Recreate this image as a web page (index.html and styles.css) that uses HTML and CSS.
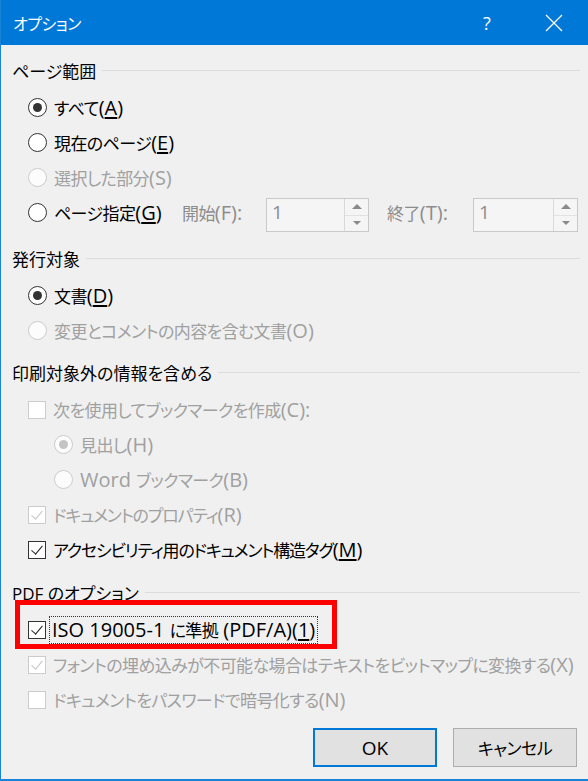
FILE: index.html
```html
<!DOCTYPE html>
<html lang="ja">
<head>
  <meta charset="UTF-8" />
  <meta name="viewport" content="width=device-width, initial-scale=1.0"/>
  <title>オプション</title>
  <link rel="stylesheet" href="styles.css">
</head>
<body>
  <div class="dialog">
    <header class="titlebar">
      <span class="title">オプション</span>
      <span class="help">?</span>
      <span class="close">
        <svg width="18" height="18" viewBox="0 0 18 18"><path d="M1 1L17 17M17 1L1 17" stroke="#fff" stroke-width="1.3" fill="none"/></svg>
      </span>
    </header>

    <div class="content">
      <!-- ページ範囲 -->
      <section class="group">
        <div class="group-head"><span>ページ範囲</span></div>
        <div class="row"><span class="radio checked"></span><span class="label">すべて<span class="en">(<u>A</u>)</span></span></div>
        <div class="row"><span class="radio"></span><span class="label">現在のページ<span class="en">(<u>E</u>)</span></span></div>
        <div class="row disabled"><span class="radio"></span><span class="label">選択した部分<span class="en">(S)</span></span></div>
        <div class="row">
          <span class="radio"></span><span class="label page-spec">ページ指定<span class="en">(<u>G</u>)</span></span>
          <span class="spin-label first">開始<span class="en">(F):</span></span>
          <span class="spin"><span class="spin-value en">1</span><span class="spin-btns"><span class="up"></span><span class="down"></span></span></span>
          <span class="spin-label">終了<span class="en">(T):</span></span>
          <span class="spin wide"><span class="spin-value en">1</span><span class="spin-btns"><span class="up"></span><span class="down"></span></span></span>
        </div>
      </section>

      <!-- 発行対象 -->
      <section class="group after-spin">
        <div class="group-head"><span>発行対象</span></div>
        <div class="row"><span class="radio checked"></span><span class="label">文書<span class="en">(<u>D</u>)</span></span></div>
        <div class="row disabled"><span class="radio"></span><span class="label">変更とコメントの内容を含む文書<span class="en">(O)</span></span></div>
      </section>

      <!-- 印刷対象外の情報 -->
      <section class="group third">
        <div class="group-head"><span>印刷対象外の情報を含める</span></div>
        <div class="row disabled"><span class="check"></span><span class="label">次を使用してブックマークを作成<span class="en">(C):</span></span></div>
        <div class="row disabled indent"><span class="radio checked"></span><span class="label">見出し<span class="en">(H)</span></span></div>
        <div class="row disabled indent"><span class="radio"></span><span class="label"><span class="en">Word </span>ブックマーク<span class="en">(B)</span></span></div>
        <div class="row disabled tight"><span class="check checked"></span><span class="label">ドキュメントのプロパティ<span class="en">(R)</span></span></div>
        <div class="row tight"><span class="check checked"></span><span class="label">アクセシビリティ用のドキュメント構造タグ<span class="en">(<u>M</u>)</span></span></div>
      </section>

      <!-- PDF のオプション -->
      <section class="group">
        <div class="group-head"><span>PDF のオプション</span></div>
        <div class="row marked"><span class="check checked"></span><span class="label focus"><span class="en">ISO 19005-1 </span>に準拠<span class="en"> (PDF/A)(<u>1</u>)</span></span></div>
        <div class="row disabled"><span class="check checked"></span><span class="label">フォントの埋め込みが不可能な場合はテキストをビットマップに変換する<span class="en">(X)</span></span></div>
        <div class="row disabled"><span class="check"></span><span class="label">ドキュメントをパスワードで暗号化する<span class="en">(N)</span></span></div>
      </section>

      <div class="buttons">
        <button class="btn default"><span class="en">OK</span></button>
        <button class="btn">キャンセル</button>
      </div>
    </div>
  </div>
</body>
</html>
```

FILE: styles.css
```css
body {
  margin: 0;
  padding: 0;
  background: #f0f0f0;
  font-family: "Open Sans", "Noto Sans CJK JP", sans-serif;
  font-feature-settings: "palt";
  color: #000;
}
.dialog {
  width: 587px;
  height: 779px;
  border-left: 1px solid #1883d7;
  border-bottom: 2px solid #1883d7;
  background: #f0f0f0;
}
.titlebar {
  height: 45px;
  background: #0078d7;
  color: #fff;
  display: flex;
  align-items: center;
  padding-left: 12px;
}
.title {
  font-size: 16px;
  letter-spacing: -0.5px;
  flex: 1;
}
.help {
  font-size: 18px;
  width: 70px;
  text-align: center;
  margin-right: 1px;
}
.close {
  width: 62px;
  display: flex;
  justify-content: center;
  margin-right: 3px;
}
.content {
  padding: 0 8px 0 11px;
}
.group {
  margin-top: 11px;
}
.group.after-spin {
  margin-top: 14px;
}
.group.third {
  margin-top: 10px;
}
.group-head {
  height: 28px;
  display: flex;
  align-items: center;
  font-size: 17px;
  margin-bottom: 6px;
}
.group-head::after {
  content: "";
  flex: 1;
  height: 1px;
  background: #dcdcdc;
  margin-left: 6px;
}
.row {
  height: 35px;
  display: flex;
  align-items: center;
  padding-left: 16px;
  font-size: 17px;
  letter-spacing: -0.6px;
  line-height: 1.2;
  position: relative;
}
.row.tight {
  letter-spacing: -1.2px;
}
.row.indent {
  padding-left: 42px;
}
.row.disabled {
  color: #a0a0a0;
}
.label {
  margin-left: 7px;
  white-space: nowrap;
}
.en {
  font-size: 20px;
  letter-spacing: 0;
}
u {
  text-underline-offset: 2px;
}

/* radio */
.radio {
  width: 19px;
  height: 19px;
  box-sizing: border-box;
  border: 1.5px solid #333;
  border-radius: 50%;
  background: #fff;
  display: flex;
  align-items: center;
  justify-content: center;
  flex-shrink: 0;
}
.radio.checked::after {
  content: "";
  width: 9px;
  height: 9px;
  border-radius: 50%;
  background: #333;
}
.disabled .radio {
  border-color: #cccccc;
  background: #fcfcfc;
}
.disabled .radio.checked::after {
  background: #c4c4c4;
}

/* checkbox */
.check {
  width: 18px;
  height: 18px;
  box-sizing: border-box;
  border: 1px solid #333;
  background: #fff;
  position: relative;
  flex-shrink: 0;
}
.check.checked::after {
  content: "";
  position: absolute;
  left: 5px;
  top: 1px;
  width: 5px;
  height: 10px;
  border-right: 1.6px solid #222;
  border-bottom: 1.6px solid #222;
  transform: rotate(40deg);
}
.disabled .check {
  border-color: #cccccc;
}
.disabled .check.checked::after {
  border-color: #c4c4c4;
}

/* spin boxes */
.page-spec {
  width: 109px;
}
.spin-label {
  color: #8c8c8c;
  width: 86px;
  margin-left: 18px;
  white-space: nowrap;
}
.spin-label.first {
  width: 84px;
  margin-left: 19px;
}
.spin {
  width: 103px;
  height: 34px;
  box-sizing: border-box;
  border: 1px solid #c9c9c9;
  background: #f5f5f5;
  display: flex;
  margin-top: 5px;
}
.spin.wide {
  width: 105px;
}
.spin-value {
  flex: 1;
  color: #8c8c8c;
  padding: 2px 0 0 5px;
  font-size: 19px;
}
.spin-btns {
  width: 23px;
  border-left: 1px solid #d9d9d9;
  display: flex;
  flex-direction: column;
}
.spin-btns span {
  flex: 1;
  display: flex;
  align-items: center;
  justify-content: center;
}
.spin-btns .up {
  border-bottom: 1px solid #e2e2e2;
}
.spin-btns .up::after {
  content: "";
  border-left: 5px solid transparent;
  border-right: 5px solid transparent;
  border-bottom: 5px solid #8a8a8a;
}
.spin-btns .down::after {
  content: "";
  border-left: 4px solid transparent;
  border-right: 4px solid transparent;
  border-top: 4px solid #8a8a8a;
}

/* highlighted option */
.row.marked::before {
  content: "";
  position: absolute;
  left: 3px;
  top: -12px;
  width: 312px;
  height: 39px;
  border: 5px solid #ff0000;
}
.focus {
  outline: 1px dotted #333;
  outline-offset: 1px;
  padding: 0 1px;
  margin-left: 5px;
}

/* buttons */
.buttons {
  display: flex;
  justify-content: flex-end;
  gap: 16px;
  margin-top: 11px;
  padding-right: 3px;
}
.btn {
  width: 124px;
  height: 39px;
  background: #e1e1e1;
  border: 1px solid #adadad;
  font-family: "Open Sans", "Noto Sans CJK JP", sans-serif;
  font-feature-settings: "palt";
  font-size: 17px;
  letter-spacing: -0.5px;
  color: #000;
  padding: 0;
}
.btn .en {
  font-size: 19px;
}
.btn.default {
  border: 2px solid #0078d7;
}
```
